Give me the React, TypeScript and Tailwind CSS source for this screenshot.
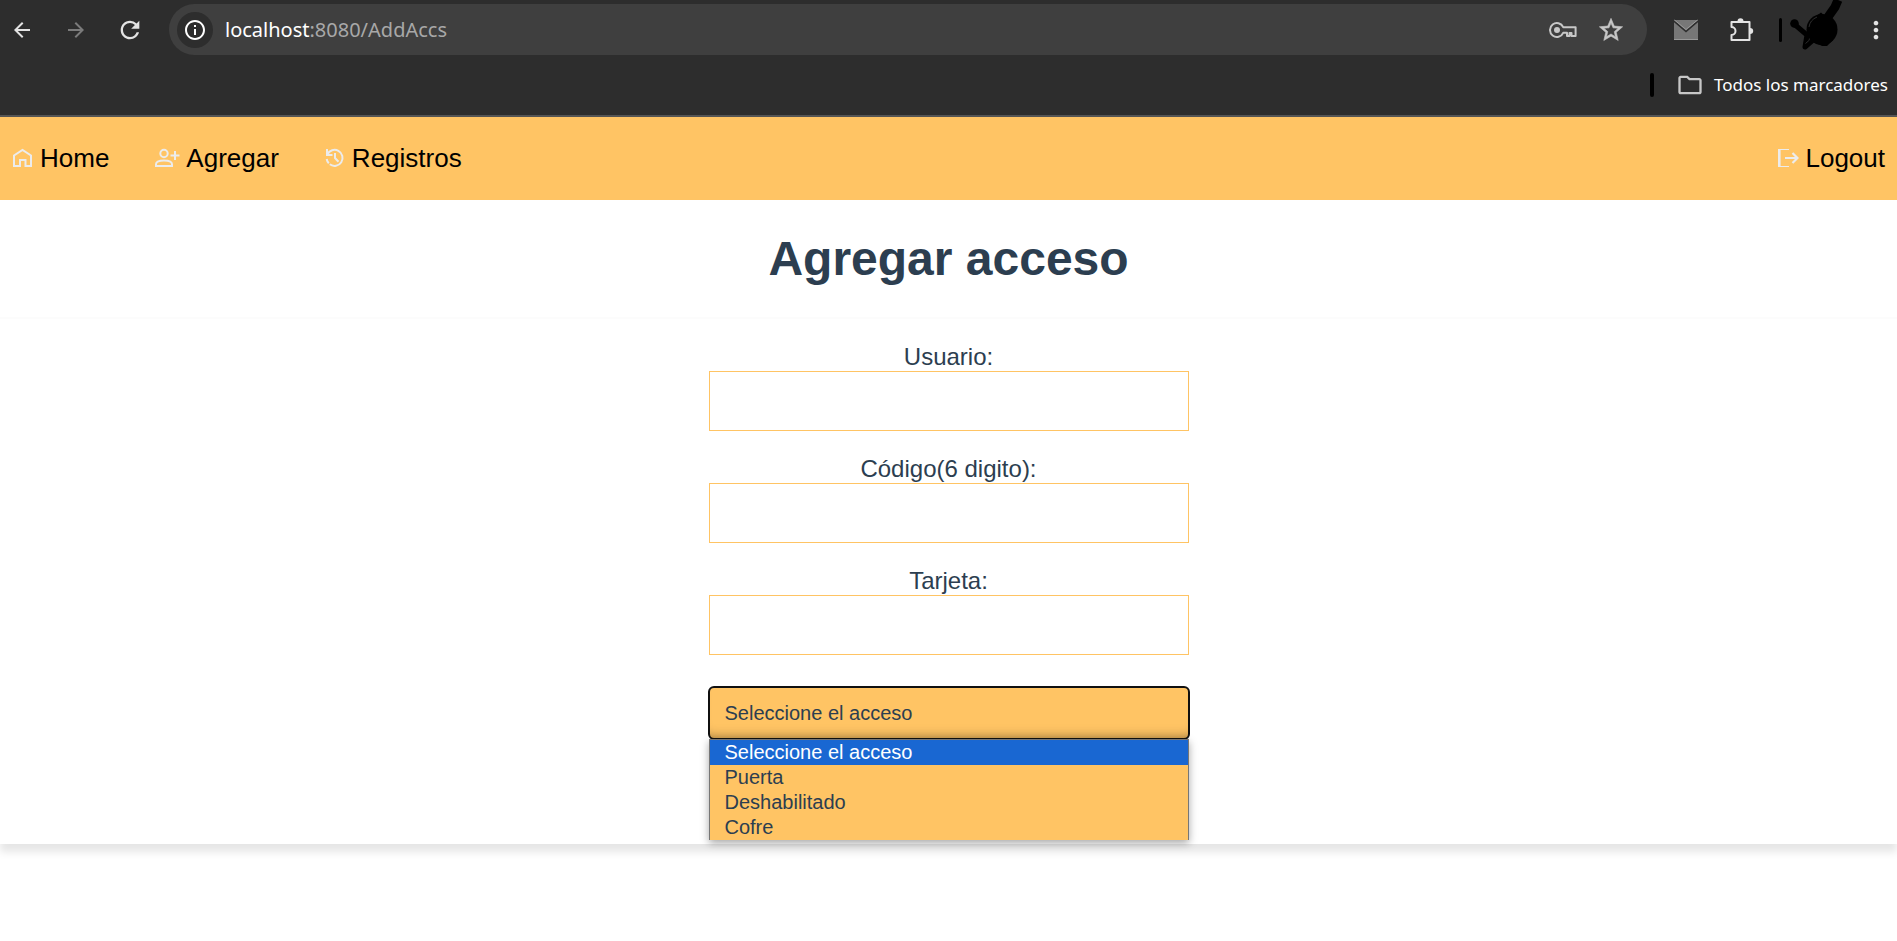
import { useState, type ReactNode } from "react";
import {
  MdArrowBack,
  MdArrowForward,
  MdInfoOutline,
  MdMoreVert,
  MdOutlineFolder,
  MdRefresh,
  MdStarOutline,
} from "react-icons/md";

const ACCESS_OPTIONS = ["Seleccione el acceso", "Puerta", "Deshabilitado", "Cofre"];

const KeyIcon = () => (
  <svg width="28" height="18" viewBox="0 0 28 18" fill="none" stroke="#c7c7c7" strokeWidth="2">
    <path d="M14.2 6.2A6.9 6.9 0 1 0 14.2 11.8H18V15H20.5V12H22.5V15H26.6V6.2Z" strokeLinejoin="round" />
    <circle cx="8" cy="9" r="3" fill="#c7c7c7" stroke="none" />
  </svg>
);

const MailIcon = () => (
  <svg width="26" height="22" viewBox="0 0 26 22">
    <path d="M1 1H25V21H1Z" fill="#777" />
    <path d="M1 2.2L13 12.5L25 2.2" fill="none" stroke="#2d2d2d" strokeWidth="1.6" />
    <path d="M1.500 1L13 10.500L24.500 1" fill="none" stroke="#999" strokeWidth="1" />
    <path d="M1 20.500H25" stroke="#999" strokeWidth="1" />
  </svg>
);

const PuzzleIcon = () => (
  <svg width="26" height="26" viewBox="0 0 26 26">
    <path
      d="M2.5 5H20.500V23H2.5V18A4 4 0 0 0 2.5 10Z"
      fill="none"
      stroke="#e3e3e3"
      strokeWidth="2"
      strokeLinejoin="round"
    />
    <path d="M8.500 4.500A3 3.200 0 0 1 14.500 4.500Z" fill="#e3e3e3" />
    <path d="M21 11A3.200 3 0 0 1 21 17Z" fill="#e3e3e3" />
  </svg>
);

const ScribbleAvatar = () => (
  <svg width="54" height="59" viewBox="0 0 54 59" className="block">
    <circle cx="32" cy="29.500" r="15.500" />
    <path d="M3.500 23.500L17 35L15 47L23 40" fill="none" stroke="#000" strokeWidth="5" strokeLinecap="round" strokeLinejoin="round" />
    <circle cx="4.500" cy="23.500" r="4.300" />
    <path d="M48 0L45 7L38 17" fill="none" stroke="#000" strokeWidth="9" />
    <path d="M25 17L31 12.500L36 17ZM26 43L32 46H37L43 40Z" />
    <path d="M19 27Q20 20 27 17M15.500 43.500L19.500 40" stroke="#2d2d2d" strokeWidth="1" fill="none" />
  </svg>
);

const HomeIcon = () => (
  <svg width="22" height="20" viewBox="0 0 22 20" fill="none" stroke="#ececec" strokeWidth="2">
    <path d="M2 18V7.500L10.500 2L19 7.500V18H13.500V12H8V18Z" />
  </svg>
);

const PersonAddIcon = () => (
  <svg width="26" height="20" viewBox="0 0 26 20" fill="none" stroke="#ececec" strokeWidth="2">
    <circle cx="10" cy="5.500" r="3.700" />
    <path d="M2 18V16.200C2 13.500 6.500 12.500 10 12.500S18 13.500 18 16.200V18Z" />
    <path d="M21 3V12M16.500 7.500H25.500" />
  </svg>
);

const HistoryIcon = () => (
  <svg width="22" height="20" viewBox="0 0 22 20" fill="none" stroke="#ececec" strokeWidth="2">
    <path d="M3.300 6.500A8 8 0 1 1 5.800 16.300" />
    <path d="M4.800 15.300A8 8 0 0 1 2.700 11" />
    <path d="M3 1V7H8.500" />
    <path d="M11 5V10L14.500 13.800" />
  </svg>
);

const LogoutIcon = () => (
  <svg width="22" height="20" viewBox="0 0 22 20" fill="none" stroke="#ececec">
    <path d="M12 1.500H2M2 18.500H12" strokeWidth="1" />
    <path d="M2.300 1V19" strokeWidth="2.600" />
    <path d="M8 10H20M15.500 5L20.500 10L15.500 15" strokeWidth="2.200" />
  </svg>
);

function NavLink({ icon, children }: { icon: ReactNode; children: ReactNode }) {
  return (
    <a href="#" className="flex items-center gap-[6px] text-[26px] leading-8 text-black">
      {icon}
      {children}
    </a>
  );
}

function BrowserBar() {
  return (
    <header className="border-b-2 border-[#555] bg-[#2d2d2d] font-['Noto_Sans','Open_Sans',sans-serif]">
      <div className="flex h-[59px] items-center pl-[10px] pr-[7px] text-[#e3e3e3]">
        <button aria-label="Atrás" className="mr-[30px]"><MdArrowBack size={24} /></button>
        <button aria-label="Adelante" className="mr-7 text-[#7b7b7b]"><MdArrowForward size={24} /></button>
        <button aria-label="Recargar" className="mr-[25px]"><MdRefresh size={28} /></button>
        <div className="flex h-[51px] flex-1 items-center rounded-full bg-[#3f3f3f] pl-2 pr-[22px]">
          <button aria-label="Información del sitio" className="flex size-9 items-center justify-center rounded-full bg-[#2d2d2d] text-white">
            <MdInfoOutline size={24} />
          </button>
          <p className="ml-3 flex-1 text-[20px] leading-6 text-[#a8a8a8]">
            <span className="text-white">localhost</span>:8080/AddAccs
          </p>
          <button aria-label="Contraseñas" className="mr-5"><KeyIcon /></button>
          <button aria-label="Añadir a marcadores" className="text-[#c7c7c7]">
            <MdStarOutline size={28} className="stroke-current stroke-[0.5]" />
          </button>
        </div>
        <button aria-label="Correo" className="ml-[26px]"><MailIcon /></button>
        <button aria-label="Extensiones" className="ml-[30px]"><PuzzleIcon /></button>
        <span className="ml-6 h-6 w-[3px] rounded bg-black" />
        <button aria-label="Perfil" className="ml-2"><ScribbleAvatar /></button>
        <button aria-label="Menú" className="ml-[18px]"><MdMoreVert size={28} /></button>
      </div>
      <div className="flex h-14 items-center justify-end pb-1 pr-[9px]">
        <span className="mr-[22px] h-6 w-1 rounded bg-black" />
        <button className="flex items-center gap-[10px] text-[17px] leading-6 text-white">
          <MdOutlineFolder size={28} className="text-[#c7c7c7]" />
          Todos los marcadores
        </button>
      </div>
    </header>
  );
}

function Field({ id, label }: { id: string; label: string }) {
  return (
    <div className="mb-6 flex flex-col">
      <label htmlFor={id} className="text-center text-2xl leading-7">{label}</label>
      <input id={id} className="h-[60px] border border-[#ffc464] bg-white px-4 text-xl outline-none" />
    </div>
  );
}

function AccessSelect() {
  const [value, setValue] = useState(ACCESS_OPTIONS[0]);
  return (
    <div className="relative mt-8">
      <select
        aria-label="Acceso"
        value={value}
        onChange={(e) => setValue(e.target.value)}
        className="block h-[52px] w-full appearance-none rounded-[5px] bg-[#ffc464] px-4 text-xl text-[#2c3e50] shadow-[inset_0_-12px_12px_-10px_rgba(0,0,0,0.35)] outline-2 -outline-offset-1 outline-[#101010]"
      >
        {ACCESS_OPTIONS.map((o) => <option key={o}>{o}</option>)}
      </select>
      <ul className="absolute inset-x-0 top-full border-x border-t border-[#767676] bg-[#ffc464] text-xl leading-6 shadow-[0_3px_8px_rgba(0,0,0,0.35)]">
        {ACCESS_OPTIONS.map((o) => (
          <li key={o} className={o === value ? "bg-[#1967d2] px-[15px] pb-px text-white" : "px-[15px] pb-px"}>{o}</li>
        ))}
      </ul>
    </div>
  );
}

export default function App() {
  return (
    <div className="min-h-screen bg-white font-['Liberation_Sans',Arial,sans-serif] text-[#2c3e50]">
      <BrowserBar />
      <nav className="flex h-[83px] items-center bg-[#ffc464] px-3 pb-[2px]">
        <div className="flex flex-1 gap-[45px]">
          <NavLink icon={<HomeIcon />}>Home</NavLink>
          <NavLink icon={<PersonAddIcon />}>Agregar</NavLink>
          <NavLink icon={<HistoryIcon />}>Registros</NavLink>
        </div>
        <NavLink icon={<LogoutIcon />}>Logout</NavLink>
      </nav>
      <main className="shadow-[0_8px_8px_rgba(0,0,0,0.1)]">
        <div className="flex h-[119px] items-center justify-center border-b-2 border-[#fcfcfc]">
          <h1 className="text-5xl font-bold">Agregar acceso</h1>
        </div>
        <form className="mx-auto w-[480px] max-w-full pb-[105px] pt-6">
          <Field id="usuario" label="Usuario:" />
          <Field id="codigo" label="Código(6 digito):" />
          <Field id="tarjeta" label="Tarjeta:" />
          <AccessSelect />
        </form>
      </main>
    </div>
  );
}
